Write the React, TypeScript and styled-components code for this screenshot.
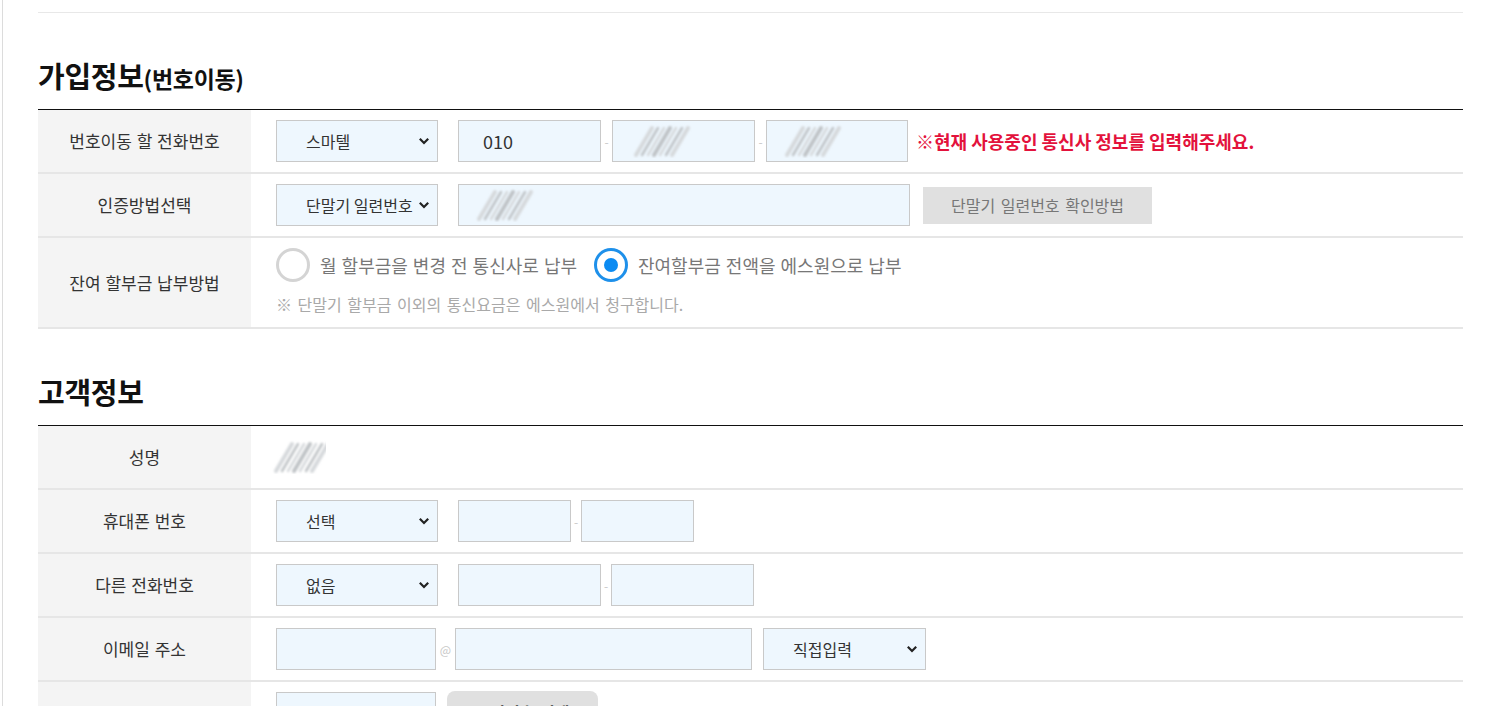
import styled, { createGlobalStyle } from 'styled-components';

const GlobalStyle = createGlobalStyle`
	html, body {
		margin: 0;
		padding: 0;
		background: #fff;
	}
	body {
		font-family: "Noto Sans CJK KR", "Noto Sans", "Liberation Sans", sans-serif;
		color: #333;
		overflow: hidden;
	}
	* {
		box-sizing: border-box;
	}
`;

const Page = styled.div`
	margin-left: 2px;
	border-left: 1px solid #dcdcdc;
	padding: 0 34px 0 35px;
	min-height: 706px;
`;

const TopRule = styled.div`
	height: 13px;
	border-bottom: 1px solid #e8e8e8;
`;

const Title = styled.h2`
	display: flex;
	align-items: baseline;
	margin: 42px 0 14px;
	height: 40px;
	font-size: 29px;
	line-height: 40px;
	font-weight: 700;
	color: #111;
	letter-spacing: -0.3px;
`;

const TitleSub = styled.span`
	font-size: 23px;
	font-weight: 700;
`;

const Table = styled.div`
	border-top: 1px solid #111;
`;

const Row = styled.div`
	display: grid;
	grid-template-columns: 213px 1fr;
	border-bottom: 2px solid #e6e6e6;
`;

const Label = styled.div`
	background: #f4f4f4;
	display: flex;
	align-items: center;
	justify-content: center;
	font-size: 17px;
	line-height: 22px;
	color: #333;
	word-spacing: 1px;
`;

const Field = styled.div<{ $stack?: boolean }>`
	display: flex;
	flex-direction: ${(p) => (p.$stack ? 'column' : 'row')};
	align-items: ${(p) => (p.$stack ? 'flex-start' : 'center')};
	padding: 10px 0 ${(p) => (p.$stack ? '13px' : '10px')} 25px;
	min-height: 62px;
`;

const Line = styled.div`
	display: flex;
	align-items: center;
	height: 34px;
`;

const SelectWrap = styled.div<{ $w: number; $ml: number }>`
	position: relative;
	width: ${(p) => p.$w}px;
	height: 42px;
	margin-left: ${(p) => p.$ml}px;
	flex: none;
`;

const SelectBox = styled.select`
	appearance: none;
	width: 100%;
	height: 100%;
	border: 1px solid #c9c9c9;
	background: #eef7fe;
	padding: 0 0 0 29px;
	font-family: inherit;
	font-size: 16px;
	color: #333;
	border-radius: 0;
	outline: none;
`;

const Chevron = styled.svg`
	position: absolute;
	right: 8px;
	top: 17px;
	pointer-events: none;
`;

const TextBox = styled.div<{ $w: number; $ml: number }>`
	position: relative;
	display: flex;
	align-items: center;
	width: ${(p) => p.$w}px;
	height: 42px;
	margin-left: ${(p) => p.$ml}px;
	border: 1px solid #c9c9c9;
	background: #eef7fe;
	padding-left: 24px;
	font-size: 18px;
	color: #333;
	flex: none;
`;

const Sep = styled.span<{ $w: number }>`
	width: ${(p) => p.$w}px;
	text-align: center;
	font-size: 12px;
	color: #c8c8c8;
	flex: none;
`;

const Warn = styled.span`
	margin-left: 8px;
	font-size: 18px;
	font-weight: 700;
	color: #e3123c;
	white-space: nowrap;
`;

const GrayButton = styled.button<{ $w: number; $ml: number; $round?: boolean }>`
	width: ${(p) => p.$w}px;
	height: ${(p) => (p.$round ? 42 : 37)}px;
	margin-left: ${(p) => p.$ml}px;
	border: none;
	border-radius: ${(p) => (p.$round ? '8px' : '0')};
	background: #e0e0e0;
	font-family: inherit;
	font-size: 16px;
	word-spacing: 2px;
	font-weight: ${(p) => (p.$round ? 700 : 400)};
	color: ${(p) => (p.$round ? '#333' : '#777')};
	flex: none;
	align-self: ${(p) => (p.$round ? 'flex-start' : 'center')};
	margin-top: ${(p) => (p.$round ? '-1px' : '0')};
`;

const RadioLabel = styled.label<{ $ml: number }>`
	display: flex;
	align-items: center;
	margin-left: ${(p) => p.$ml}px;
	font-size: 18px;
	color: #777;
	white-space: nowrap;
	word-spacing: 1px;
`;

const RadioCircle = styled.span<{ $on: boolean }>`
	position: relative;
	width: 34px;
	height: 34px;
	border-radius: 50%;
	border: 3px solid ${(p) => (p.$on ? '#1e90ea' : '#d4d4d4')};
	background: #fff;
	margin-right: 10px;
	flex: none;

	&::after {
		content: '';
		display: ${(p) => (p.$on ? 'block' : 'none')};
		position: absolute;
		left: 7px;
		top: 7px;
		width: 14px;
		height: 14px;
		border-radius: 50%;
		background: #0b8bf2;
	}
`;

const Note = styled.p<{ $gap: number }>`
	margin: ${(p) => p.$gap}px 0 0;
	font-size: 16px;
	line-height: 20px;
	color: #a9a9a9;
	word-spacing: 2px;
`;

const Plain = styled.span<{ $ml: number }>`
	margin-left: ${(p) => p.$ml}px;
	font-size: 16px;
	color: #999;
	white-space: nowrap;
	align-self: flex-start;
	margin-top: 12px;
`;

const Scribble = ({ w, x = 0 }: { w: number; x?: number }) => (
	<svg width={w} height="34" viewBox={`0 0 ${w} 34`} style={{ marginLeft: x }}>
		<defs>
			<filter id="soft" x="-20%" y="-20%" width="140%" height="140%">
				<feGaussianBlur stdDeviation="1.1" />
			</filter>
		</defs>
		<g filter="url(#soft)" strokeLinecap="round">
			{[0, 6, 12, 18, 24, 30, 36].map((o, i) => (
				<line
					key={o}
					x1={4 + o}
					y1={31}
					x2={20 + o}
					y2={4}
					stroke={i % 2 ? '#bfc3c6' : '#d6d9dc'}
					strokeWidth={i % 3 === 0 ? 4 : 2.5}
				/>
			))}
		</g>
	</svg>
);

const Select = ({ value, w = 162, ml = 0 }: { value: string; w?: number; ml?: number }) => (
	<SelectWrap $w={w} $ml={ml}>
		<SelectBox defaultValue={value}>
			<option>{value}</option>
		</SelectBox>
		<Chevron width="12" height="8" viewBox="0 0 12 8">
			<path d="M1.8 1.8 L6 6 L10.2 1.8" fill="none" stroke="#222" strokeWidth="2.2" />
		</Chevron>
	</SelectWrap>
);

const App = () => {
	return (
		<>
			<GlobalStyle />
			<Page>
				<TopRule />

				<Title>
					가입정보<TitleSub>(번호이동)</TitleSub>
				</Title>
				<Table>
					<Row>
						<Label>번호이동 할 전화번호</Label>
						<Field>
							<Select value="스마텔" />
							<TextBox $w={143} $ml={20}>010</TextBox>
							<Sep $w={11}>-</Sep>
							<TextBox $w={143} $ml={0}>
								<Scribble w={60} x={-5} />
							</TextBox>
							<Sep $w={11}>-</Sep>
							<TextBox $w={142} $ml={0}>
								<Scribble w={60} x={-8} />
							</TextBox>
							<Warn>※현재 사용중인 통신사 정보를 입력해주세요.</Warn>
						</Field>
					</Row>
					<Row>
						<Label>인증방법선택</Label>
						<Field>
							<Select value="단말기 일련번호" />
							<TextBox $w={452} $ml={20}>
								<Scribble w={60} x={-8} />
							</TextBox>
							<GrayButton $w={229} $ml={13}>단말기 일련번호 확인방법</GrayButton>
						</Field>
					</Row>
					<Row>
						<Label>잔여 할부금 납부방법</Label>
						<Field $stack>
							<Line>
								<RadioLabel $ml={0}>
									<RadioCircle $on={false} />
									월 할부금을 변경 전 통신사로 납부
								</RadioLabel>
								<RadioLabel $ml={17}>
									<RadioCircle $on />
									잔여할부금 전액을 에스원으로 납부
								</RadioLabel>
							</Line>
							<Note $gap={12}>※ 단말기 할부금 이외의 통신요금은 에스원에서 청구합니다.</Note>
						</Field>
					</Row>
				</Table>

				<Title>고객정보</Title>
				<Table>
					<Row>
						<Label>성명</Label>
						<Field>
							<Scribble w={54} x={-4} />
						</Field>
					</Row>
					<Row>
						<Label>휴대폰 번호</Label>
						<Field>
							<Select value="선택" />
							<TextBox $w={113} $ml={20} />
							<Sep $w={10}>-</Sep>
							<TextBox $w={113} $ml={0} />
						</Field>
					</Row>
					<Row>
						<Label>다른 전화번호</Label>
						<Field>
							<Select value="없음" />
							<TextBox $w={143} $ml={20} />
							<Sep $w={10}>-</Sep>
							<TextBox $w={143} $ml={0} />
						</Field>
					</Row>
					<Row>
						<Label>이메일 주소</Label>
						<Field>
							<TextBox $w={160} $ml={0} />
							<Sep $w={19}>@</Sep>
							<TextBox $w={297} $ml={0} />
							<Select value="직접입력" w={163} ml={11} />
						</Field>
					</Row>
					<Row>
						<Label>주소</Label>
						<Field>
							<TextBox $w={160} $ml={0} />
							<GrayButton $w={151} $ml={11} $round>우편번호 검색</GrayButton>
							<Plain $ml={33}>입력하신 주소는 유심 배송 및 청구서 발송에 사용되오니 정확한 주소를 입력해 주시기 바랍니다.</Plain>
						</Field>
					</Row>
				</Table>
			</Page>
		</>
	);
};

export default App;
